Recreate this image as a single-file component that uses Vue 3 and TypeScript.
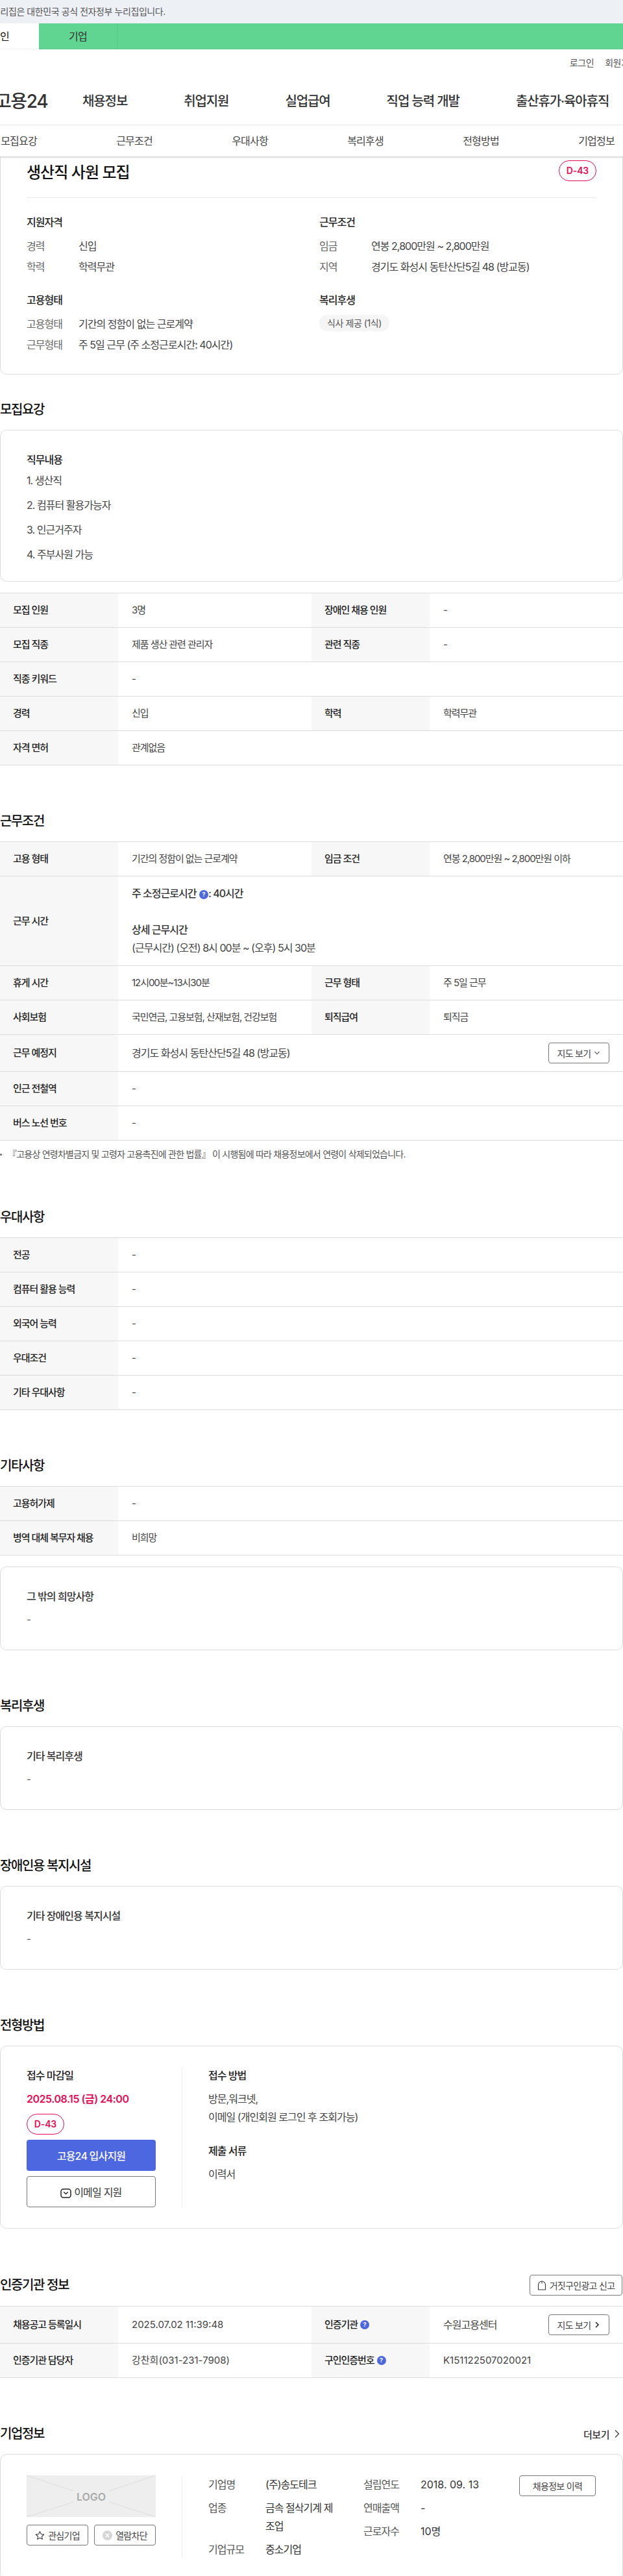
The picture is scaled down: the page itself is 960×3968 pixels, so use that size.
<script setup lang="ts">
interface Cell {
  label: string
  value: string
  num?: boolean
}

type Row = Cell[]

const tabs = ['모집요강', '근무조건', '우대사항', '복리후생', '전형방법', '기업정보']
const menus = ['채용정보', '취업지원', '실업급여', '직업 능력 개발', '출산휴가·육아휴직']
const duties = ['1. 생산직', '2. 컴퓨터 활용가능자', '3. 인근거주자', '4. 주부사원 가능']

const recruitRows: Row[] = [
  [{ label: '모집 인원', value: '3명' }, { label: '장애인 채용 인원', value: '-' }],
  [{ label: '모집 직종', value: '제품 생산 관련 관리자' }, { label: '관련 직종', value: '-' }],
  [{ label: '직종 키워드', value: '-' }],
  [{ label: '경력', value: '신입' }, { label: '학력', value: '학력무관' }],
  [{ label: '자격 면허', value: '관계없음' }]
]

const benefitRows: Row[] = [
  [{ label: '전공', value: '-' }],
  [{ label: '컴퓨터 활용 능력', value: '-' }],
  [{ label: '외국어 능력', value: '-' }],
  [{ label: '우대조건', value: '-' }],
  [{ label: '기타 우대사항', value: '-' }]
]

const etcRows: Row[] = [
  [{ label: '고용허가제', value: '-' }],
  [{ label: '병역 대체 복무자 채용', value: '비희망' }]
]

const companyLeft: Cell[] = [
  { label: '기업명', value: '(주)송도테크' },
  { label: '업종', value: '금속 절삭기계 제조업' },
  { label: '기업규모', value: '중소기업' }
]
const companyRight: Cell[] = [
  { label: '설립연도', value: '2018. 09. 13', num: true },
  { label: '연매출액', value: '-' },
  { label: '근로자수', value: '10명', num: true }
]
</script>

<template>
  <div class="page">
    <div class="gov-bar"><span>누리집은 대한민국 공식 전자정부 누리집입니다.</span></div>
    <div class="user-tabs">
      <span class="user-tab on">개인</span>
      <span class="user-tab">기업</span>
    </div>
    <header class="head">
      <div class="util">
        <span>로그인</span>
        <span>회원가입</span>
      </div>
      <div class="gnb">
        <span class="logo">고용24</span>
        <nav class="menus">
          <span v-for="m in menus" :key="m">{{ m }}</span>
        </nav>
      </div>
      <div class="tabs">
        <span v-for="t in tabs" :key="t" class="tab">{{ t }}</span>
      </div>
    </header>

    <section class="card summary">
      <div class="title-row">
        <h1>생산직 사원 모집</h1>
        <span class="dday">D-43</span>
      </div>
      <div class="summary-grid">
        <div>
          <h3>지원자격</h3>
          <dl class="pairs">
            <dt>경력</dt><dd>신입</dd>
            <dt>학력</dt><dd>학력무관</dd>
          </dl>
        </div>
        <div>
          <h3>근무조건</h3>
          <dl class="pairs">
            <dt>임금</dt><dd>연봉 2,800만원 ~ 2,800만원</dd>
            <dt>지역</dt><dd>경기도 화성시 동탄산단5길 48 (방교동)</dd>
          </dl>
        </div>
        <div>
          <h3>고용형태</h3>
          <dl class="pairs">
            <dt>고용형태</dt><dd>기간의 정함이 없는 근로계약</dd>
            <dt>근무형태</dt><dd>주 5일 근무 (주 소정근로시간: 40시간)</dd>
          </dl>
        </div>
        <div>
          <h3>복리후생</h3>
          <span class="chip">식사 제공 (1식)</span>
        </div>
      </div>
    </section>

    <section class="block first">
      <h2>모집요강</h2>
      <div class="card plain duty">
        <h3>직무내용</h3>
        <p v-for="d in duties" :key="d" class="duty-item">{{ d }}</p>
      </div>
      <div class="table gap">
        <div v-for="(row, i) in recruitRows" :key="i" class="row">
          <template v-for="c in row" :key="c.label">
            <div class="th">{{ c.label }}</div>
            <div class="td" :class="{ wide: row.length === 1 }">{{ c.value }}</div>
          </template>
        </div>
      </div>
    </section>

    <section class="block">
      <h2>근무조건</h2>
      <div class="table">
        <div class="row">
          <div class="th">고용 형태</div>
          <div class="td">기간의 정함이 없는 근로계약</div>
          <div class="th">임금 조건</div>
          <div class="td">연봉 2,800만원 ~ 2,800만원 이하</div>
        </div>
        <div class="row">
          <div class="th">근무 시간</div>
          <div class="td wide hours big">
            <strong>주 소정근로시간 <i class="help">?</i>: 40시간</strong>
            <br />
            <br />
            <strong>상세 근무시간</strong>
            <br />
            (근무시간) (오전) 8시 00분 ~ (오후) 5시 30분
          </div>
        </div>
        <div class="row">
          <div class="th">휴게 시간</div>
          <div class="td">12시00분~13시30분</div>
          <div class="th">근무 형태</div>
          <div class="td">주 5일 근무</div>
        </div>
        <div class="row">
          <div class="th">사회보험</div>
          <div class="td">국민연금, 고용보험, 산재보험, 건강보험</div>
          <div class="th">퇴직급여</div>
          <div class="td">퇴직금</div>
        </div>
        <div class="row tall">
          <div class="th">근무 예정지</div>
          <div class="td wide between big">
            <span>경기도 화성시 동탄산단5길 48 (방교동)</span>
            <button class="btn map">
              지도 보기
              <svg width="10" height="10" viewBox="0 0 10 10"><path d="M1.5 3.200 5 6.800l3.500-3.600" fill="none" stroke="#444" stroke-width="1.100" /></svg>
            </button>
          </div>
        </div>
        <div class="row">
          <div class="th">인근 전철역</div>
          <div class="td wide">-</div>
        </div>
        <div class="row">
          <div class="th">버스 노선 번호</div>
          <div class="td wide">-</div>
        </div>
      </div>
      <p class="note">『고용상 연령차별금지 및 고령자 고용촉진에 관한 법률』 이 시행됨에 따라 채용정보에서 연령이 삭제되었습니다.</p>
    </section>

    <section class="block">
      <h2>우대사항</h2>
      <div class="table">
        <div v-for="(row, i) in benefitRows" :key="i" class="row">
          <div class="th">{{ row[0].label }}</div>
          <div class="td wide">{{ row[0].value }}</div>
        </div>
      </div>
    </section>

    <section class="block">
      <h2>기타사항</h2>
      <div class="table">
        <div v-for="(row, i) in etcRows" :key="i" class="row">
          <div class="th">{{ row[0].label }}</div>
          <div class="td wide">{{ row[0].value }}</div>
        </div>
      </div>
      <div class="card plain gap">
        <h3 class="light">그 밖의 희망사항</h3>
        <p class="dash">-</p>
      </div>
    </section>

    <section class="block">
      <h2>복리후생</h2>
      <div class="card plain">
        <h3 class="light">기타 복리후생</h3>
        <p class="dash">-</p>
      </div>
    </section>

    <section class="block">
      <h2>장애인용 복지시설</h2>
      <div class="card plain">
        <h3 class="light">기타 장애인용 복지시설</h3>
        <p class="dash">-</p>
      </div>
    </section>

    <section class="block">
      <h2>전형방법</h2>
      <div class="card plain apply">
        <div class="side">
          <h3>접수 마감일</h3>
          <p class="deadline">2025.08.15 (금) 24:00</p>
          <span class="dday">D-43</span>
          <button class="apply-main">고용24 입사지원</button>
          <button class="apply-mail">
            <svg width="17" height="15" viewBox="0 0 17 15">
              <rect x="1" y="1" width="15" height="13" rx="3.500" fill="none" stroke="#222" stroke-width="1.500" />
              <path d="M5.200 5.600 8.500 8.600l3.300-3" fill="none" stroke="#222" stroke-width="1.400" />
            </svg>
            이메일 지원
          </button>
        </div>
        <div class="method">
          <h3>접수 방법</h3>
          <p class="method-text">방문,워크넷,<br />이메일 (개인회원 로그인 후 조회가능)</p>
          <h3 class="docs">제출 서류</h3>
          <p class="method-text">이력서</p>
        </div>
      </div>
    </section>

    <section class="block">
      <div class="head-row">
        <h2>인증기관 정보</h2>
        <button class="btn report">
          <svg width="14" height="15" viewBox="0 0 14 15">
            <path d="M1.500 14V6.500a5.500 5.500 0 0 1 11 0V14z" fill="none" stroke="#333" stroke-width="1.100" />
            <path d="M7 1v3.500" stroke="#333" stroke-width="1.100" />
          </svg>
          거짓구인광고 신고
        </button>
      </div>
      <div class="table">
        <div class="row tall">
          <div class="th">채용공고 등록일시</div>
          <div class="td num">2025.07.02 11:39:48</div>
          <div class="th">인증기관 <i class="help">?</i></div>
          <div class="td between big">
            <span>수원고용센터</span>
            <button class="btn map">
              지도 보기
              <svg width="10" height="12" viewBox="0 0 10 12"><path d="M3 2l4 4-4 4" fill="none" stroke="#222" stroke-width="1.500" /></svg>
            </button>
          </div>
        </div>
        <div class="row">
          <div class="th">인증기관 담당자</div>
          <div class="td num">강찬희(031-231-7908)</div>
          <div class="th">구인인증번호 <i class="help">?</i></div>
          <div class="td num">K151122507020021</div>
        </div>
      </div>
    </section>

    <section class="block">
      <div class="head-row center">
        <h2>기업정보</h2>
        <span class="more">
          더보기
          <svg width="8" height="14" viewBox="0 0 8 14"><path d="M1 1.500 6.500 7 1 12.500" fill="none" stroke="#333" stroke-width="1.200" /></svg>
        </span>
      </div>
      <div class="card plain company">
        <div class="side">
          <svg class="logo-box" width="199" height="64" viewBox="0 0 199 64">
            <rect width="199" height="64" fill="#eee" />
            <path d="M0 0 72 24M199 0 127 24M0 64 72 41M199 64 127 41" stroke="#ddd" stroke-width="1" />
            <text x="99.500" y="39" text-anchor="middle" class="logo-text">LOGO</text>
          </svg>
          <div class="side-btns">
            <button class="btn">
              <svg width="15" height="15" viewBox="0 0 16 16"><path d="m8 1.500 2 4.300 4.700.6-3.500 3.200.9 4.700L8 12l-4.100 2.300.9-4.700L1.300 6.400 6 5.800z" fill="none" stroke="#333" stroke-width="1.100" stroke-linejoin="round" /></svg>
              관심기업
            </button>
            <button class="btn">
              <svg width="15" height="15" viewBox="0 0 15 15">
                <circle cx="7.500" cy="7.500" r="7.500" fill="#d5d5d5" />
                <path d="m4.800 4.800 5.400 5.400m0-5.400-5.400 5.400" stroke="#fff" stroke-width="1.500" />
              </svg>
              열람차단
            </button>
          </div>
        </div>
        <div class="company-info">
          <dl class="facts left">
            <template v-for="f in companyLeft" :key="f.label">
              <dt>{{ f.label }}</dt><dd>{{ f.value }}</dd>
            </template>
          </dl>
          <dl class="facts right">
            <template v-for="f in companyRight" :key="f.label">
              <dt>{{ f.label }}</dt><dd :class="{ num: f.num }">{{ f.value }}</dd>
            </template>
          </dl>
          <button class="btn history">채용정보 이력</button>
        </div>
      </div>
    </section>
  </div>
</template>

<style>
html,
body {
  margin: 0;
  background: #fff;
}
</style>

<style scoped>
.page {
  width: 960px;
  height: 3968px;
  overflow: hidden;
  font-family: Inter, "Noto Sans CJK KR", sans-serif;
  color: #222;
  font-size: 15px;
  letter-spacing: -0.07em;
}

h1, h2, h3, p, dl, dd, dt {
  margin: 0;
}

.gov-bar {
  height: 36px;
  line-height: 36px;
  background: #edf0f5;
  color: #555;
  font-size: 14px;
  letter-spacing: -0.03em;
  white-space: nowrap;
  margin-left: -12px;
}

.user-tabs {
  display: flex;
  height: 40px;
  background: #60d591;
  margin-left: -60px;
}

.user-tab {
  width: 120px;
  line-height: 40px;
  text-align: center;
  font-size: 16px;
  letter-spacing: -0.04em;
  color: #333;
  border-right: 1px solid #55c985;
}

.user-tab.on {
  background: #fff;
  color: #111;
  border-right: 0;
}

.head {
  position: relative;
  z-index: 2;
  background: #fff;
  box-shadow: 0 1px 3px rgba(0, 0, 0, 0.25);
}

.util {
  display: flex;
  justify-content: flex-end;
  gap: 17px;
  height: 40px;
  align-items: center;
  margin-right: -22px;
  color: #555;
  font-size: 14px;
  letter-spacing: -0.03em;
}

.gnb {
  display: flex;
  align-items: center;
  height: 76px;
  border-bottom: 1px solid #e5e5e5;
  margin-left: -8px;
  white-space: nowrap;
}

.logo {
  width: 135px;
  font-size: 28px;
  font-weight: 500;
  color: #333;
  letter-spacing: -0.05em;
}

.menus {
  display: flex;
  gap: 87px;
  font-size: 20px;
  font-weight: 500;
  color: #333;
  letter-spacing: -0.055em;
}

.tabs {
  display: flex;
  height: 48px;
  margin-left: -60px;
  width: 1068px;
}

.tab {
  width: 178px;
  line-height: 48px;
  text-align: center;
  font-size: 16px;
  letter-spacing: -0.05em;
  color: #444;
}

.card {
  border: 1px solid #ddd;
  border-radius: 10px;
  box-sizing: border-box;
  padding: 32px 40px;
}

.summary {
  margin-top: -27px;
  height: 363px;
}

.title-row {
  display: flex;
  justify-content: space-between;
  align-items: center;
  height: 32px;
  padding-bottom: 25px;
  border-bottom: 1px solid #e8e8e8;
}

.title-row h1 {
  font-size: 24px;
  font-weight: 500;
  color: #111;
  letter-spacing: -0.04em;
}

.dday {
  display: inline-block;
  width: 58px;
  height: 32px;
  line-height: 30px;
  box-sizing: border-box;
  text-align: center;
  border: 1px solid #e60b55;
  border-radius: 16px;
  color: #e60b55;
  font-size: 14px;
  font-weight: 600;
  letter-spacing: -0.01em;
  background: #fff;
}

.summary-grid {
  display: grid;
  grid-template-columns: 451px 1fr;
  row-gap: 26px;
  margin-top: 24px;
}

h3 {
  font-size: 16px;
  font-weight: 500;
  line-height: 26px;
  color: #222;
  letter-spacing: -0.06em;
}

.pairs {
  display: grid;
  grid-template-columns: 80px 1fr;
  row-gap: 8px;
  margin-top: 12px;
  font-size: 16px;
  line-height: 24px;
  letter-spacing: -0.06em;
}

.pairs dt {
  color: #666;
}

.pairs dd {
  color: #444;
}

.chip {
  display: inline-block;
  margin-top: 10px;
  height: 25px;
  line-height: 25px;
  padding: 0 12px;
  background: #f5f5f5;
  border-radius: 12px;
  color: #555;
  font-size: 14px;
  letter-spacing: -0.03em;
}

.block {
  margin-top: 71px;
}

.block.first {
  margin-top: 39px;
}

h2 {
  font-size: 20px;
  font-weight: 500;
  line-height: 30px;
  color: #111;
  margin: 0 0 16px;
  letter-spacing: -0.07em;
}

.plain {
  min-height: 129px;
}

h3.light {
  margin-bottom: 9px;
  color: #333;
}

.dash {
  line-height: 28px;
  font-size: 15px;
  color: #555;
}

.duty {
  height: 234px;
}

.duty-item {
  font-size: 16px;
  line-height: 28px;
  margin-top: 10px;
  color: #444;
  letter-spacing: -0.06em;
}

.duty-item:first-of-type {
  margin-top: 5px;
}

.table {
  border-top: 1px solid #ddd;
}

.gap {
  margin-top: 17px;
}

.row {
  display: grid;
  grid-template-columns: 182px 298px 182px 298px;
  min-height: 53px;
  box-sizing: border-box;
  border-bottom: 1px solid #ddd;
}

.row.tall {
  min-height: 57px;
}

.th,
.td {
  display: flex;
  align-items: center;
  padding: 0 20px;
  box-sizing: border-box;
  line-height: 22px;
}

.th {
  background: #f7f7f7;
  font-weight: 500;
  color: #222;
}

.td {
  color: #444;
  padding-left: 21px;
}

.td.wide {
  grid-column: span 3;
}

.td.num,
dd.num {
  letter-spacing: 0;
}

.td.big {
  font-size: 16px;
  letter-spacing: -0.06em;
}

.hours {
  display: block;
  padding-top: 12px;
  padding-bottom: 12px;
  line-height: 28px;
  min-height: 137px;
}

.hours strong {
  font-weight: 500;
  color: #333;
}

.help {
  display: inline-block;
  width: 14px;
  height: 14px;
  line-height: 14px;
  margin-left: 1px;
  border-radius: 50%;
  background: #4d67e0;
  color: #fff;
  font-size: 9px;
  font-weight: 700;
  font-style: normal;
  text-align: center;
  letter-spacing: 0;
  vertical-align: 1px;
}

.th .help {
  margin-left: 4px;
}

.between {
  justify-content: space-between;
  padding-right: 21px;
}

.btn {
  display: inline-flex;
  align-items: center;
  justify-content: center;
  gap: 5px;
  height: 32px;
  box-sizing: border-box;
  border: 1px solid #777;
  border-radius: 4px;
  background: #fff;
  color: #444;
  font-family: inherit;
  font-size: 14px;
  letter-spacing: -0.05em;
  padding: 0;
  white-space: nowrap;
}

.map {
  width: 94px;
}

.note {
  margin-top: 10px;
  line-height: 22px;
  font-size: 14px;
  letter-spacing: -0.055em;
  color: #555;
  padding-left: 12px;
  position: relative;
}

.note::before {
  content: "";
  position: absolute;
  left: 0;
  top: 10px;
  width: 3px;
  height: 3px;
  border-radius: 50%;
  background: #666;
}

.apply,
.company {
  display: flex;
}

.side {
  width: 240px;
  flex: none;
  border-right: 1px solid #eee;
  box-sizing: border-box;
}

.side > .dday,
.side > button,
.side > .deadline,
.side-btns,
.logo-box {
  display: block;
  width: 199px;
}

.side > .dday {
  width: 58px;
}

.deadline {
  margin: 9px 0;
  line-height: 28px;
  font-size: 16px;
  font-weight: 600;
  color: #e60b55;
  letter-spacing: -0.03em;
}

.apply-main,
.apply-mail {
  height: 48px;
  box-sizing: border-box;
  border-radius: 4px;
  font-family: inherit;
  font-size: 16px;
  letter-spacing: -0.05em;
  padding: 0;
}

.apply-main {
  margin-top: 8px;
  background: #4d67e0;
  border: 0;
  color: #fff;
  font-weight: 500;
}

.apply-mail {
  margin-top: 8px;
  background: #fff;
  border: 1px solid #777;
  color: #333;
}

.apply-mail svg {
  vertical-align: -3px;
}

.method {
  padding-left: 40px;
}

.method-text {
  margin-top: 9px;
  font-size: 16px;
  line-height: 28px;
  color: #444;
  letter-spacing: -0.06em;
}

.docs {
  margin-top: 25px;
}

.head-row {
  display: flex;
  justify-content: space-between;
  align-items: flex-start;
  height: 48px;
}

.head-row h2 {
  line-height: 32px;
}

.head-row.center {
  height: 46px;
}

.head-row.center h2 {
  line-height: 30px;
}

.report {
  width: 143px;
  margin-right: 1px;
}

.more {
  display: flex;
  align-items: center;
  gap: 8px;
  height: 30px;
  font-size: 15px;
  font-weight: 500;
  color: #333;
  letter-spacing: -0.03em;
  padding-right: 5px;
}

.company {
  height: 193px;
}

.logo-text {
  font-family: Inter, sans-serif;
  font-size: 16px;
  font-weight: 600;
  fill: #aaa;
  letter-spacing: 0;
}

.side-btns {
  display: flex;
  justify-content: space-between;
  margin-top: 12px;
}

.side-btns .btn {
  width: 95px;
}

.company-info {
  flex: 1;
  display: flex;
  align-items: flex-start;
  padding-left: 40px;
  font-size: 16px;
  line-height: 28px;
  letter-spacing: -0.06em;
}

.facts {
  display: grid;
  grid-template-columns: 88px 1fr;
  row-gap: 8px;
}

.facts.left {
  width: 204px;
  margin-right: 35px;
}

.facts.right {
  width: 240px;
}

.facts dt {
  color: #555;
}

.facts dd {
  color: #333;
}

.history {
  width: 118px;
  flex: none;
}
</style>
